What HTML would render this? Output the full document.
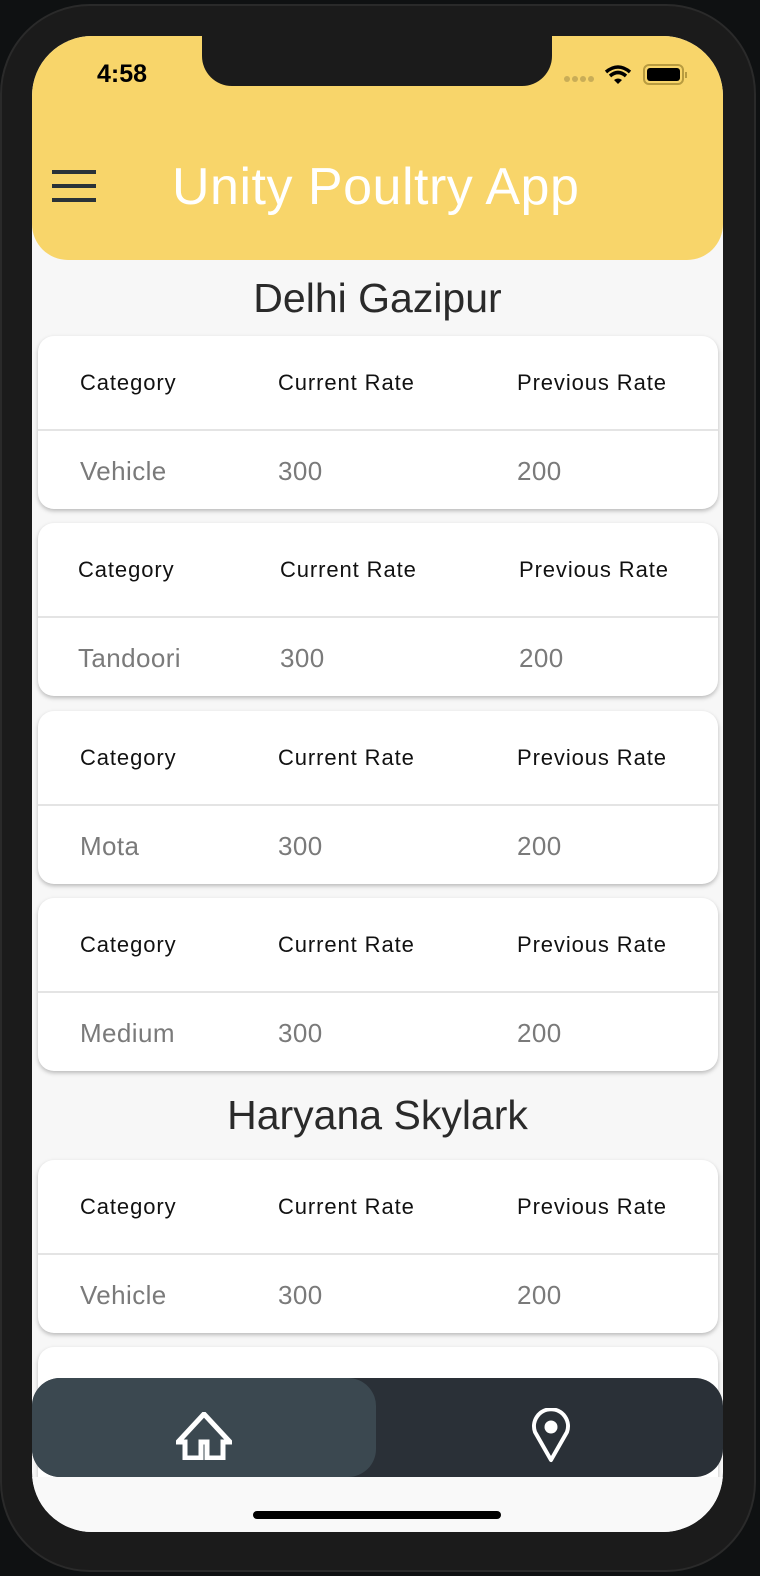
<!DOCTYPE html>
<html><head><meta charset="utf-8"><style>
*{margin:0;padding:0;box-sizing:border-box}
body{width:760px;height:1576px;background:#0f1112;overflow:hidden;position:relative;font-family:"Liberation Sans",sans-serif}
.phone{position:absolute;left:0;top:4px;width:756px;height:1568px;background:#1b1b1b;border-radius:90px;border:2px solid #2a2a2a}
.screen{position:absolute;left:32px;top:36px;width:691px;height:1496px;background:#f7f7f7;border-radius:60px;overflow:hidden}
.hdr{position:absolute;left:0;top:0;width:691px;height:224px;background:#f8d56a;border-radius:0 0 36px 36px}
.notch{position:absolute;left:170px;top:-2px;width:350px;height:52px;background:#1b1b1b;border-radius:0 0 30px 30px}
.time{position:absolute;left:65px;top:24px;font-size:25px;font-weight:bold;color:#000}
.title{position:absolute;left:140px;top:121px;font-size:52px;color:#fff;letter-spacing:0.5px}
.menu{position:absolute;left:20px;top:134px;width:44px}
.menu i{display:block;height:4px;background:#2a3238;margin-bottom:10px}
h2{position:absolute;left:0;width:691px;text-align:center;font-weight:normal;font-size:41px;color:#2a2a2a}
.card{position:absolute;left:6px;width:680px;height:173px;background:#fff;border-radius:16px;box-shadow:0 2px 4px rgba(0,0,0,.25)}
.card .row{position:absolute;left:0;width:100%}
.card .h{top:34px;color:#111;font-size:22px;letter-spacing:0.9px}
.card .d{top:120px;font-size:26px;color:#7a7a7a;letter-spacing:0.4px}
.card .line{position:absolute;left:0;right:0;top:93px;height:2px;background:#e4e4e4}
.card span{position:absolute}
.nav{position:absolute;left:0;top:1342px;width:691px;height:99px;background:#2a3037;border-radius:28px}
.act{position:absolute;left:0;top:0;width:344px;height:99px;background:#3b4850;border-radius:28px}
.bottom{position:absolute;left:0;top:1441px;width:691px;height:60px;background:#f9f9f9}
.bar{position:absolute;left:221px;top:1475px;width:248px;height:8px;border-radius:4px;background:#000}
</style></head><body>
<div class="phone"></div>
<div class="screen">
<div class="hdr">
 <div class="notch"></div>
 <div class="time">4:58</div>
 <svg style="position:absolute;left:532px;top:26px" width="160" height="30">
  <g fill="#c9ad57"><circle cx="3" cy="17" r="3"/><circle cx="11" cy="17" r="3"/><circle cx="19" cy="17" r="3"/><circle cx="27" cy="17" r="3"/></g>
  <path d="M42 10 Q54 0 66 10" stroke="#000" stroke-width="3.5" fill="none"/>
  <path d="M46 14 Q54 7 62 14" stroke="#000" stroke-width="3.5" fill="none"/>
  <path d="M50 18 L54 22 L58 18 Q54 15 50 18Z" fill="#000"/>
  <rect x="80" y="3" width="39" height="19" rx="5" fill="none" stroke="#b89b40" stroke-width="2"/>
  <rect x="83" y="6" width="33" height="13" rx="3" fill="#000"/>
  <rect x="121" y="10" width="2" height="6" fill="#b89b40"/>
 </svg>
 <div class="menu"><i></i><i></i><i></i></div>
 <div class="title">Unity Poultry App</div>
</div>
<h2 style="top:239px">Delhi Gazipur</h2>

<div class="card" style="top:300px"><div class="row h"><span style="left:42px">Category</span><span style="left:240px">Current Rate</span><span style="left:479px">Previous Rate</span></div><div class="line"></div><div class="row d"><span style="left:42px">Vehicle</span><span style="left:240px">300</span><span style="left:479px">200</span></div></div>
<div class="card" style="top:487px"><div class="row h"><span style="left:40px">Category</span><span style="left:242px">Current Rate</span><span style="left:481px">Previous Rate</span></div><div class="line"></div><div class="row d"><span style="left:40px">Tandoori</span><span style="left:242px">300</span><span style="left:481px">200</span></div></div>
<div class="card" style="top:675px"><div class="row h"><span style="left:42px">Category</span><span style="left:240px">Current Rate</span><span style="left:479px">Previous Rate</span></div><div class="line"></div><div class="row d"><span style="left:42px">Mota</span><span style="left:240px">300</span><span style="left:479px">200</span></div></div>
<div class="card" style="top:862px"><div class="row h"><span style="left:42px">Category</span><span style="left:240px">Current Rate</span><span style="left:479px">Previous Rate</span></div><div class="line"></div><div class="row d"><span style="left:42px">Medium</span><span style="left:240px">300</span><span style="left:479px">200</span></div></div>
<h2 style="top:1056px">Haryana Skylark</h2>
<div class="card" style="top:1124px"><div class="row h"><span style="left:42px">Category</span><span style="left:240px">Current Rate</span><span style="left:479px">Previous Rate</span></div><div class="line"></div><div class="row d"><span style="left:42px">Vehicle</span><span style="left:240px">300</span><span style="left:479px">200</span></div></div>
<div class="card" style="top:1311px"></div>
<div class="bottom"></div>

<div class="nav"><div class="act"></div>
 <svg style="position:absolute;left:144px;top:34px" width="56" height="48" viewBox="0 0 56 48">
  <path d="M28 2 L2 30 H9 V46 H25 V30 H31 V46 H47 V30 H54 Z" fill="none" stroke="#fff" stroke-width="5" stroke-linejoin="miter"/>
 </svg>
 <svg style="position:absolute;left:497px;top:30px" width="44" height="56" viewBox="0 0 44 56">
  <path d="M22 52 L6 24 A17 17 0 1 1 38 24 Z" fill="none" stroke="#fff" stroke-width="4" stroke-linejoin="round"/>
  <circle cx="22" cy="19" r="6.5" fill="#fff"/>
 </svg>
</div>
<div class="bar"></div>
</div>
</body></html>
